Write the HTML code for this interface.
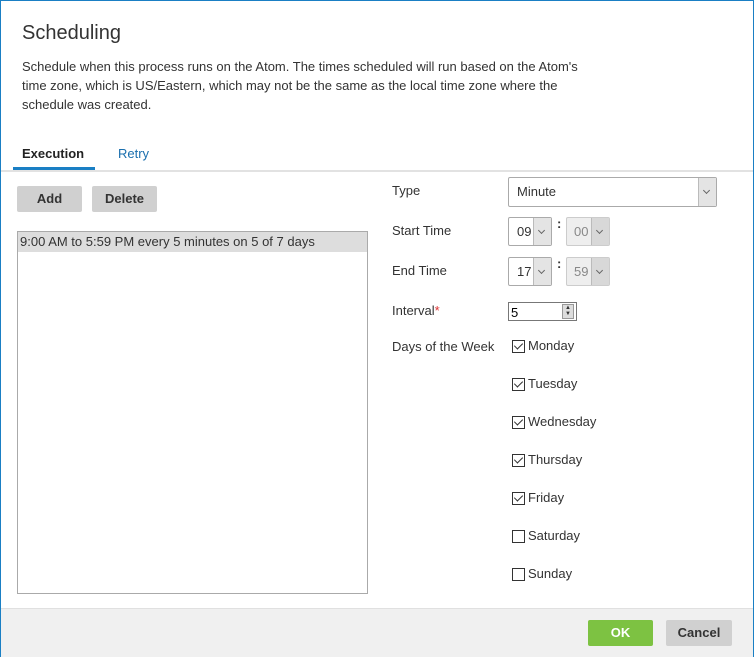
<!DOCTYPE html>
<html><head><style>
body{margin:0;width:754px;height:657px;overflow:hidden;font-family:"Liberation Sans",sans-serif;color:#333;font-size:13px;background:#fff}
.frame{position:absolute;left:0;top:0;width:752px;height:655px;border:1px solid #1a7fc4;background:#fff}
.a{position:absolute;white-space:nowrap}
.btn{position:absolute;background:#d0d0d0;border-radius:2px;font-weight:bold;text-align:center;font-size:13px;color:#333}
.sel{position:absolute;border:1px solid #aaa;border-radius:2px;background:#fff;box-sizing:border-box}
.arr{position:absolute;right:0;top:0;bottom:0;width:17px;background:#e4e4e4;border-left:1px solid #bbb}
.arr:after{content:"";position:absolute;left:5px;top:50%;margin-top:-4px;width:4px;height:4px;border-right:1px solid #666;border-bottom:1px solid #666;transform:rotate(45deg)}
.cb{position:absolute;width:11px;height:11px;border:1px solid #333;background:#fff}
.cb.c:after{content:"";position:absolute;left:3px;top:0px;width:4px;height:7px;border-right:1.5px solid #333;border-bottom:1.5px solid #333;transform:rotate(45deg)}
</style></head><body>
<div class="frame">
<div class="a" style="left:21px;top:21px;font-size:20px;color:#333">Scheduling</div>
<div class="a" style="left:21px;top:56px;line-height:19px;font-size:13px">Schedule when this process runs on the Atom. The times scheduled will run based on the Atom's<br>time zone, which is US/Eastern, which may not be the same as the local time zone where the<br>schedule was created.</div>
<div class="a" style="left:21px;top:145px;font-weight:bold;color:#222">Execution</div>
<div class="a" style="left:12px;top:166px;width:82px;height:3px;background:#1a7fc4"></div>
<div class="a" style="left:117px;top:145px;color:#1a6fae">Retry</div>
<div class="a" style="left:0;top:169px;width:752px;height:2px;background:#e2e2e2"></div>
<div class="btn" style="left:16px;top:185px;width:65px;height:26px;line-height:26px">Add</div>
<div class="btn" style="left:91px;top:185px;width:65px;height:26px;line-height:26px">Delete</div>
<div class="a" style="left:16px;top:230px;width:349px;height:361px;border:1px solid #aaa"></div>
<div class="a" style="left:17px;top:231px;width:349px;height:20px;background:#ddd;line-height:19px;padding-left:2px;box-sizing:border-box">9:00 AM to 5:59 PM every 5 minutes on 5 of 7 days</div>
<div class="a" style="left:391px;top:182px">Type</div>
<div class="sel" style="left:507px;top:176px;width:209px;height:30px"><span class="a" style="left:8px;top:6px">Minute</span><div class="arr"></div></div>
<div class="a" style="left:391px;top:222px">Start Time</div>
<div class="sel" style="left:507px;top:216px;width:44px;height:29px"><span class="a" style="left:8px;top:6px">09</span><div class="arr"></div></div>
<div class="a" style="left:556px;top:215px;font-weight:bold">:</div>
<div class="sel" style="left:565px;top:216px;width:44px;height:29px;background:#eee;border-color:#ccc"><span class="a" style="left:7px;top:6px;color:#888">00</span><div class="arr" style="background:#d8d8d8"></div></div>
<div class="a" style="left:391px;top:262px">End Time</div>
<div class="sel" style="left:507px;top:256px;width:44px;height:29px"><span class="a" style="left:8px;top:6px">17</span><div class="arr"></div></div>
<div class="a" style="left:556px;top:255px;font-weight:bold">:</div>
<div class="sel" style="left:565px;top:256px;width:44px;height:29px;background:#eee;border-color:#ccc"><span class="a" style="left:7px;top:6px;color:#888">59</span><div class="arr" style="background:#d8d8d8"></div></div>
<div class="a" style="left:391px;top:302px">Interval<span style="color:#d33">*</span></div>
<div class="a" style="left:507px;top:301px;width:69px;height:19px;border:1px solid #777;box-sizing:border-box"><span class="a" style="left:2px;top:2px;color:#000">5</span><div class="a" style="right:2px;top:1px;width:12px;height:15px;background:#ddd;border:1px solid #999;box-sizing:border-box;font-size:6px;line-height:6px;text-align:center">▲<br>▼</div></div>
<div class="a" style="left:391px;top:338px">Days of the Week</div>
<div class="cb c" style="left:511px;top:339px"></div><div class="a" style="left:527px;top:337px">Monday</div>
<div class="cb c" style="left:511px;top:377px"></div><div class="a" style="left:527px;top:375px">Tuesday</div>
<div class="cb c" style="left:511px;top:415px"></div><div class="a" style="left:527px;top:413px">Wednesday</div>
<div class="cb c" style="left:511px;top:453px"></div><div class="a" style="left:527px;top:451px">Thursday</div>
<div class="cb c" style="left:511px;top:491px"></div><div class="a" style="left:527px;top:489px">Friday</div>
<div class="cb" style="left:511px;top:529px"></div><div class="a" style="left:527px;top:527px">Saturday</div>
<div class="cb" style="left:511px;top:567px"></div><div class="a" style="left:527px;top:565px">Sunday</div>
<div class="a" style="left:0;top:607px;width:752px;height:48px;background:#f0f0f0;border-top:1px solid #e0e0e0"></div>
<div class="btn" style="left:587px;top:619px;width:65px;height:26px;line-height:26px;background:#7dc242;color:#fff">OK</div>
<div class="btn" style="left:665px;top:619px;width:66px;height:26px;line-height:26px">Cancel</div>
</div>
</body></html>
